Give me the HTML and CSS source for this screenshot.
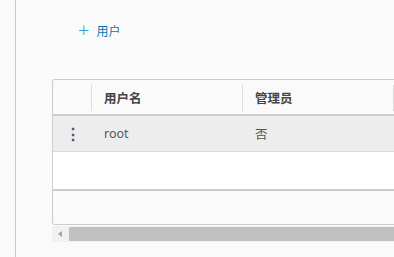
FILE: index.html
```html
<!DOCTYPE html>
<html>
<head>
<meta charset="utf-8">
<link rel="stylesheet" href="styles.css">
</head>
<body>
<div class="side"></div>
<div class="main">
  <div class="toolbar">
    <button class="add-btn"><span class="plus">+</span><span>用户</span></button>
  </div>
  <div class="grid">
    <div class="table">
      <div class="row head">
        <div class="cell c0"></div>
        <div class="cell c1"><span class="sep"></span>用户名</div>
        <div class="cell c2"><span class="sep"></span>管理员</div>
        <div class="cell c3"><span class="sep"></span></div>
      </div>
      <div class="row body-row">
        <div class="cell c0"><span class="dots">⋮</span></div>
        <div class="cell c1 val">root</div>
        <div class="cell c2 val">否</div>
        <div class="cell c3"></div>
      </div>
      <div class="empty"></div>
      <div class="footer"></div>
    </div>
    <div class="scrollbar">
      <div class="arrow"></div>
      <div class="thumb"></div>
    </div>
  </div>
</div>
</body>
</html>
```
FILE: styles.css
```css
html, body {
  margin: 0;
  padding: 0;
  height: 100%;
}
body {
  background: #fafafa;
  display: flex;
  font-family: "Noto Sans", "Noto Sans CJK SC", sans-serif;
  overflow: hidden;
}
.side {
  width: 15px;
  flex: none;
  border-right: 1px solid #c8c8c8;
}
.main {
  flex: 1;
  padding-left: 36px;
  min-width: 0;
  overflow: hidden;
}
.toolbar {
  height: 79px;
  padding-top: 21px;
  box-sizing: border-box;
}
.add-btn {
  display: flex;
  align-items: center;
  gap: 7px;
  border: none;
  background: none;
  padding: 0 0 0 26px;
  color: #0079b8;
  font-family: "Noto Sans", "Noto Sans CJK SC", sans-serif;
  font-size: 12px;
  height: 20px;
}
.plus {
  font-size: 20px;
  font-weight: 300;
  line-height: 20px;
  color: #3a9fd0;
  margin-top: -2px;
}
.grid {
  width: 400px;
}
.table {
  border: 1px solid #cccccc;
  border-right: none;
  border-radius: 3px 0 0 3px;
  overflow: hidden;
}
.row {
  display: flex;
}
.cell {
  flex: none;
  position: relative;
  display: flex;
  align-items: center;
  box-sizing: border-box;
  padding-left: 13px;
  font-size: 12px;
}
.c0 { width: 38px; padding-left: 0; justify-content: center; }
.c1 { width: 151px; }
.c2 { width: 151px; }
.c3 { width: 60px; }
.head {
  background: #fafafa;
  height: 34px;
  border-bottom: 2px solid #cccccc;
  font-weight: 600;
  font-size: 13px;
  color: #454545;
}
.head .cell { font-size: 12.5px; }
.sep {
  position: absolute;
  left: 0;
  top: 5px;
  bottom: 3px;
  width: 1px;
  background: #dddddd;
}
.body-row {
  background: #ededed;
  height: 35px;
  border-bottom: 1px solid #dddddd;
  color: #565656;
}
.val { font-size: 12.5px; }
.dots {
  font-size: 16px;
  color: #565656;
  font-weight: 700;
  margin-left: 1px;
}
.empty {
  background: #ffffff;
  height: 37px;
  border-bottom: 2px solid #cccccc;
}
.footer {
  background: #fafafa;
  height: 33px;
}
.scrollbar {
  display: flex;
  height: 16px;
  margin-top: 1px;
  background: #f1f1f1;
}
.arrow {
  width: 17px;
  flex: none;
  position: relative;
}
.arrow::before {
  content: "";
  position: absolute;
  left: 6px;
  top: 5px;
  border-right: 4px solid #a3a3a3;
  border-top: 3px solid transparent;
  border-bottom: 3px solid transparent;
}
.thumb {
  flex: 1;
  margin: 1px 0;
  background: #c1c1c1;
}
```
